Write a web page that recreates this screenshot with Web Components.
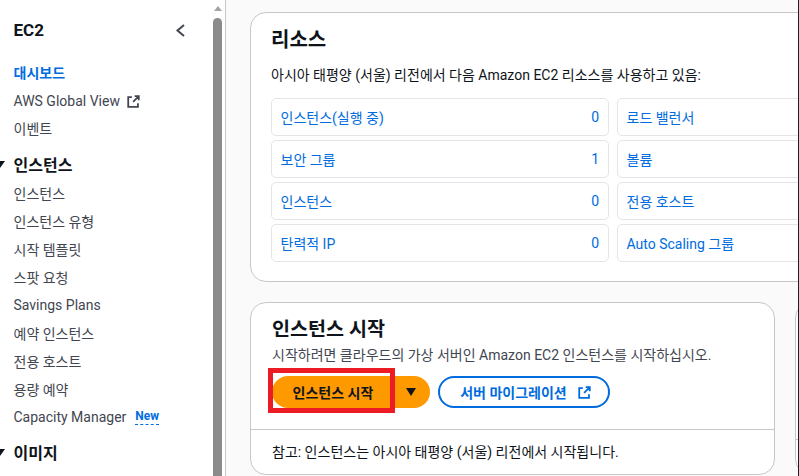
<!DOCTYPE html>
<html lang="ko"><head><meta charset="utf-8">
<style>
html,body{margin:0;height:100%;overflow:hidden;background:#fafafa}
body{font-family:Roboto,"Noto Sans CJK KR",sans-serif;font-size:14px;color:#0f141a}
</style></head><body>
<script>
const svgExt=(n)=>`<svg viewBox="0 0 16 16" width="${n}" height="${n}" fill="none" stroke="currentColor" stroke-width="2.200"><path d="M9.500 1.500H14.500V6.500M14.500 1.500L7.500 8.500M6 2.500H1.500V14.500H13.500V10"/></svg>`;
class NavItem extends HTMLElement{constructor(){super();const s=this.attachShadow({mode:'open'});
s.innerHTML=`<style>:host{display:flex;align-items:center;height:28px;font-size:14px;color:#424650;white-space:nowrap}:host([active]){color:#006ce0;font-weight:700}:host([head]){color:#0f141a;font-weight:700;font-size:16px;position:relative}:host([head])::before{content:"";position:absolute;left:-19px;top:11px;border-left:5px solid transparent;border-right:5px solid transparent;border-top:7px solid #0f141a}</style><slot></slot>`}}
customElements.define('nav-item',NavItem);
class ExtIcon extends HTMLElement{connectedCallback(){if(!this.shadowRoot){const s=this.attachShadow({mode:'open'});const n=this.getAttribute('size')||13;s.innerHTML=`<style>:host{display:inline-flex}</style>${svgExt(n)}`}}}
customElements.define('ext-icon',ExtIcon);
class SideNav extends HTMLElement{constructor(){super();const s=this.attachShadow({mode:'open'});
s.innerHTML=`<style>:host{display:flex;flex:none;width:226px;height:100%;background:#fff;box-sizing:border-box;border-right:1px solid #c6c6cd}
.in{flex:1;min-width:0;padding:0 0 0 13.500px;overflow:hidden}
.top{display:flex;justify-content:space-between;align-items:center;height:28px;margin:16px 0 0;padding-right:27px;font-size:17px;font-weight:700;color:#0f141a}
.top svg{width:12px;height:15px}
.list{margin-top:14px}
.sb{flex:none;width:9px;margin-right:3px;display:flex;flex-direction:column;align-items:center;background:#fff}
.arrow{margin-top:6px;border-left:4.500px solid transparent;border-right:4.500px solid transparent;border-bottom:5px solid #a3a3a3;margin-bottom:7px}
.thumb{flex:1;width:9px;background:#8b8b8b;border-radius:4.500px 4.500px 0 0}
</style><div class="in"><div class="top"><span>EC2</span><svg viewBox="0 0 12 15" fill="none" stroke="#424650" stroke-width="2"><path d="M10 2L3.500 7.500L10 13"/></svg></div><div class="list"><slot></slot></div></div><div class="sb"><div class="arrow"></div><div class="thumb"></div></div>`}}
customElements.define('side-nav',SideNav);
class RCell extends HTMLElement{constructor(){super();const s=this.attachShadow({mode:'open'});
s.innerHTML=`<style>:host{display:flex;justify-content:space-between;align-items:center;height:38px;box-sizing:border-box;border:1px solid #e4e5e9;border-radius:5px;padding:0 8.500px;color:#006ce0;font-size:14px;background:#fff;white-space:nowrap}</style><slot></slot><span id="n"></span>`}
connectedCallback(){this.shadowRoot.getElementById('n').textContent=this.getAttribute('n')??''}}
customElements.define('r-cell',RCell);
class ACard extends HTMLElement{constructor(){super();const s=this.attachShadow({mode:'open'});
s.innerHTML=`<style>:host{display:block;flex:none;background:#fff;border:1px solid #c6c6cd;border-radius:16px;box-sizing:border-box}</style><slot></slot>`}}
customElements.define('a-card',ACard);
class ResCard extends HTMLElement{constructor(){super();const s=this.attachShadow({mode:'open'});
s.innerHTML=`<style>:host{display:block}
a-card{height:270px;padding:0 20px;width:600px}
h2{margin:0;padding-top:12px;font-size:20px;line-height:30px;font-weight:700;color:#0f141a}
p{margin:10px 0 0;font-size:14px;line-height:20px;color:#0f141a;white-space:nowrap}
.grid{display:grid;grid-template-columns:337.500px 200px;column-gap:8.500px;row-gap:4px;margin-top:13px}
</style><a-card><h2>리소스</h2><p>아시아 태평양 (서울) 리전에서 다음 Amazon EC2 리소스를 사용하고 있음:</p><div class="grid"><slot></slot></div></a-card>`}}
customElements.define('res-card',ResCard);
class LaunchCard extends HTMLElement{constructor(){super();const s=this.attachShadow({mode:'open'});
s.innerHTML=`<style>:host{display:flex;gap:20px}
.main{width:525px;height:173px}
.side{width:100px;height:173px}
.side div{height:136px;border-bottom:1px solid #c6c6cd}
.b{padding:0 21px;height:127px;box-sizing:border-box;border-bottom:1px solid #c6c6cd}
h2{margin:0;padding-top:13px;font-size:19.600px;line-height:28px;font-weight:700;color:#0f141a}
p{margin:1px 0 0;font-size:14px;line-height:20px;color:#424650;white-space:nowrap}
.acts{display:flex;align-items:center;margin-top:11px;gap:8px}
.split{display:flex;width:158px;height:32px;background:#ff9900;border-radius:16px;position:relative;color:#0f141a;font-weight:700;font-size:14px}
.split .m{width:122px;display:flex;align-items:center;justify-content:center;white-space:nowrap}
.split .c{flex:1;display:flex;align-items:center;justify-content:center;padding-right:2px}
.tri{border-left:5.500px solid transparent;border-right:5.500px solid transparent;border-top:8px solid #0f141a}
.hl{position:absolute;left:-4px;top:-8px;width:127px;height:45px;box-sizing:border-box;border:5px solid #ed1c24;pointer-events:none}
.out{display:flex;align-items:center;justify-content:center;gap:11px;width:172px;height:32px;box-sizing:border-box;border:2px solid #006ce0;border-radius:16px;padding-left:3px;color:#006ce0;font-weight:700;font-size:14px;white-space:nowrap}
.f{padding:0 21px;line-height:44px;font-size:14px;color:#0f141a;white-space:nowrap}
</style><a-card class="main"><div class="b"><h2>인스턴스 시작</h2><p>시작하려면 클라우드의 가상 서버인 Amazon EC2 인스턴스를 시작하십시오.</p><div class="acts"><div class="split"><div class="m">인스턴스 시작</div><div class="c"><i class="tri"></i></div><div class="hl"></div></div><div class="out">서버 마이그레이션 <ext-icon size="13"></ext-icon></div></div></div><div class="f">참고: 인스턴스는 아시아 태평양 (서울) 리전에서 시작됩니다.</div></a-card><a-card class="side"><div></div></a-card>`}}
customElements.define('launch-card',LaunchCard);
class MainArea extends HTMLElement{constructor(){super();const s=this.attachShadow({mode:'open'});
s.innerHTML=`<style>:host{display:flex;flex-direction:column;flex:1;min-width:0;height:100%;overflow:hidden;padding:12px 0 0 24px;box-sizing:border-box;gap:20px;background:#fafafa}</style><slot></slot>`}}
customElements.define('main-area',MainArea);
class AppShell extends HTMLElement{constructor(){super();const s=this.attachShadow({mode:'open'});
s.innerHTML=`<style>:host{display:flex;height:476px;width:799px;overflow:hidden;box-sizing:border-box;border-right:1px solid #1b1f2a}</style><slot></slot>`}}
customElements.define('app-shell',AppShell);
</script>
<app-shell>
<side-nav>
<nav-item active>대시보드</nav-item>
<nav-item style="position:relative;top:1px">AWS Global View<ext-icon style="margin-left:7px" size="13"></ext-icon></nav-item>
<nav-item>이벤트</nav-item>
<nav-item head style="margin-top:8px;margin-bottom:1px">인스턴스</nav-item>
<nav-item>인스턴스</nav-item>
<nav-item>인스턴스 유형</nav-item>
<nav-item>시작 템플릿</nav-item>
<nav-item>스팟 요청</nav-item>
<nav-item>Savings Plans</nav-item>
<nav-item>예약 인스턴스</nav-item>
<nav-item>전용 호스트</nav-item>
<nav-item>용량 예약</nav-item>
<nav-item>Capacity Manager&nbsp;&nbsp;<b style="color:#006ce0;font-size:12px;border-bottom:1px dashed #006ce0;line-height:15px;margin-left:2px">New</b></nav-item>
<nav-item head style="margin-top:7px">이미지</nav-item>
</side-nav>
<main-area>
<res-card>
<r-cell n="0">인스턴스(실행 중)</r-cell><r-cell>로드 밸런서</r-cell>
<r-cell n="1">보안 그룹</r-cell><r-cell>볼륨</r-cell>
<r-cell n="0">인스턴스</r-cell><r-cell>전용 호스트</r-cell>
<r-cell n="0">탄력적 IP</r-cell><r-cell>Auto Scaling 그룹</r-cell>
</res-card>
<launch-card></launch-card>
</main-area>
</app-shell>
</body></html>
